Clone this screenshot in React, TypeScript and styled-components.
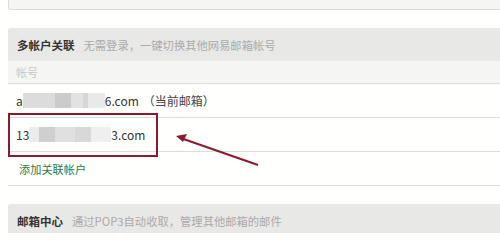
import styled, { createGlobalStyle } from 'styled-components';

const GlobalStyle = createGlobalStyle`
  html, body {
    margin: 0;
    padding: 0;
    background: #fffffd;
    overflow: hidden;
  }
  body {
    font-family: "Noto Sans CJK SC", "Open Sans", sans-serif;
    color: #333;
  }
`;

const Page = styled.div`
  position: relative;
  width: 500px;
  height: 233px;
  padding-left: 8px;
  box-sizing: border-box;
  overflow: hidden;
`;

const TopBox = styled.div`
  height: 9px;
  margin-right: -20px;
  background: #f5f5f3;
  border: 1px solid #dcdcda;
  border-top: none;
  border-bottom-left-radius: 3px;
`;

const Section = styled.section<{ $gap: number }>`
  margin-top: ${(p) => p.$gap}px;
  margin-right: -20px;
`;

const SectionHead = styled.div`
  height: 33px;
  display: flex;
  align-items: center;
  gap: 9px;
  padding-left: 9px;
  background: #e8e8e6;
  border-radius: 3px 0 0 0;
`;

const HeadTitle = styled.span`
  font-size: 11.5px;
  font-weight: 700;
  color: #333;
`;

const HeadNote = styled.span`
  font-size: 11.3px;
  color: #aaa;
`;

const ColHead = styled.div`
  height: 22px;
  display: flex;
  align-items: center;
  padding-left: 8px;
  background: #f5f5f3;
  border-bottom: 1px solid #dcdcda;
  font-size: 11px;
  color: #c8c8c8;
`;

const Row = styled.div`
  height: 33px;
  display: flex;
  align-items: center;
  padding-left: 8px;
  border-bottom: 1px solid #dcdcda;
  font-size: 12px;
  color: #333;
  white-space: nowrap;
`;

const Mosaic = styled.span<{ $w: number; $tone: string }>`
  display: inline-block;
  width: ${(p) => p.$w}px;
  height: 15px;
  background: ${(p) => p.$tone};
  filter: blur(0.6px);
`;

const Note = styled.span`
  margin-left: 4px;
  color: #444;
`;

const AddLink = styled.a`
  padding-left: 3px;
  font-size: 11.2px;
  color: #2b7a47;
  text-decoration: none;
`;

const Highlight = styled.div`
  position: absolute;
  left: 8px;
  top: 113px;
  width: 146px;
  height: 40px;
  border: 2px solid #8b1a2c;
  pointer-events: none;
`;

const Arrow = styled.svg`
  position: absolute;
  left: 0;
  top: 0;
  pointer-events: none;
`;

const blurA = [
  { w: 32, tone: '#dcdcdc' },
  { w: 16, tone: '#cbcbcb' },
  { w: 12, tone: '#e2e2e2' },
  { w: 5, tone: '#d6d6d6' },
  { w: 17, tone: '#e9e9e9' },
];

const blurB = [
  { w: 10, tone: '#ececec' },
  { w: 16, tone: '#cfcfcf' },
  { w: 20, tone: '#e0e0e0' },
  { w: 16, tone: '#d8d8d8' },
  { w: 20, tone: '#efefef' },
];

const App = () => {
  return (
    <>
      <GlobalStyle />
      <Page>
        <TopBox />
        <Section $gap={18}>
          <SectionHead>
            <HeadTitle>多帐户关联</HeadTitle>
            <HeadNote>无需登录，一键切换其他网易邮箱帐号</HeadNote>
          </SectionHead>
          <ColHead>帐号</ColHead>
          <Row>
            a
            {blurA.map((b, i) => (
              <Mosaic key={i} $w={b.w} $tone={b.tone} />
            ))}
            6.com
            <Note>（当前邮箱）</Note>
          </Row>
          <Row>
            13
            {blurB.map((b, i) => (
              <Mosaic key={i} $w={b.w} $tone={b.tone} />
            ))}
            3.com
          </Row>
          <Row>
            <AddLink href="#">添加关联帐户</AddLink>
          </Row>
        </Section>
        <Section $gap={18}>
          <SectionHead>
            <HeadTitle>邮箱中心</HeadTitle>
            <HeadNote>通过POP3自动收取，管理其他邮箱的邮件</HeadNote>
          </SectionHead>
        </Section>
        <Highlight />
        <Arrow width="500" height="233" viewBox="0 0 500 233">
          <line x1="258" y1="165" x2="182" y2="138.5" stroke="#8b1a2c" strokeWidth="2" />
          <polygon points="176,136 187,134 183,142" fill="#8b1a2c" />
        </Arrow>
      </Page>
    </>
  );
};

export default App;
